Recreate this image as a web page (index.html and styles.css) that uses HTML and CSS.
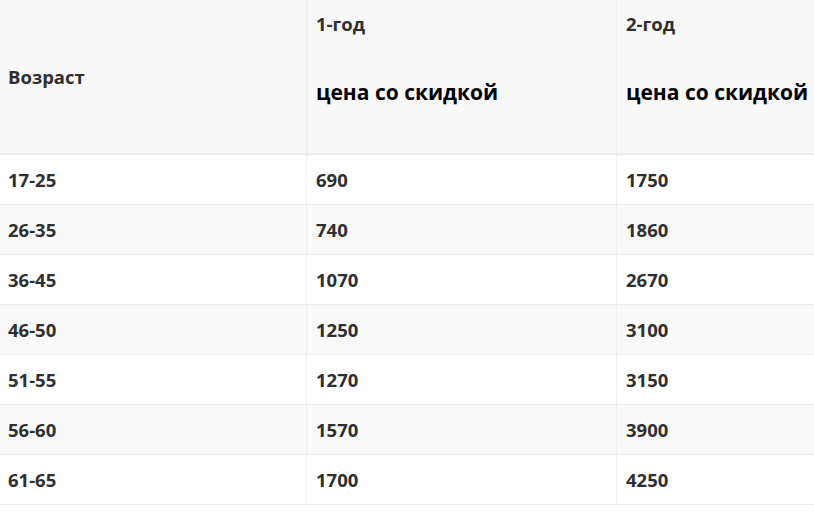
FILE: index.html
```html
<!DOCTYPE html>
<html lang="ru">
<head>
<meta charset="utf-8">
<title>Тарифы</title>
<link rel="stylesheet" href="styles.css">
</head>
<body>
<table class="prices">
  <colgroup>
    <col class="c-age">
    <col class="c-year">
    <col class="c-year">
  </colgroup>
  <thead>
    <tr>
      <th class="age-head">Возраст</th>
      <th class="year-head"><p class="year">1-год</p><p class="label">цена со скидкой</p></th>
      <th class="year-head"><p class="year">2-год</p><p class="label">цена со скидкой</p></th>
    </tr>
  </thead>
  <tbody>
    <tr><td>17-25</td><td>690</td><td>1750</td></tr>
    <tr><td>26-35</td><td>740</td><td>1860</td></tr>
    <tr><td>36-45</td><td>1070</td><td>2670</td></tr>
    <tr><td>46-50</td><td>1250</td><td>3100</td></tr>
    <tr><td>51-55</td><td>1270</td><td>3150</td></tr>
    <tr><td>56-60</td><td>1570</td><td>3900</td></tr>
    <tr><td>61-65</td><td>1700</td><td>4250</td></tr>
  </tbody>
</table>
</body>
</html>
```
FILE: styles.css
```css
html, body {
  margin: 0;
  padding: 0;
  background: #ffffff;
  overflow: hidden;
}

body {
  font-family: "Open Sans", "Noto Sans", sans-serif;
  font-weight: 700;
  color: #2f2f2f;
}

.prices {
  border-collapse: separate;
  border-spacing: 0;
  table-layout: fixed;
  width: 926px;
}

.c-age { width: 306px; }
.c-year { width: 310px; }

.prices th,
.prices td {
  text-align: left;
  font-size: 18.5px;
  line-height: 24px;
  box-sizing: border-box;
}

.prices th:first-child,
.prices td:first-child {
  padding: 0 8px;
}

.prices th + th,
.prices td + td {
  border-left: 1px dotted #e6e6e6;
  padding: 0 10px 0 9px;
}

.prices thead th {
  height: 155px;
  background: #f8f8f8;
  border-bottom: 2px solid #ececec;
}

.age-head {
  vertical-align: middle;
}

.year-head {
  vertical-align: top;
}

.year-head .year {
  margin: 12px 0 0;
  font-size: 18.5px;
  line-height: 24px;
}

.year-head .label {
  margin: 41px 0 0;
  font-size: 21px;
  line-height: 30px;
  color: #000000;
}

.prices td {
  height: 50px;
  vertical-align: middle;
  border-bottom: 1px solid #ececec;
}

.prices tbody tr:nth-child(even) td {
  background: #f9f9f9;
}
```
